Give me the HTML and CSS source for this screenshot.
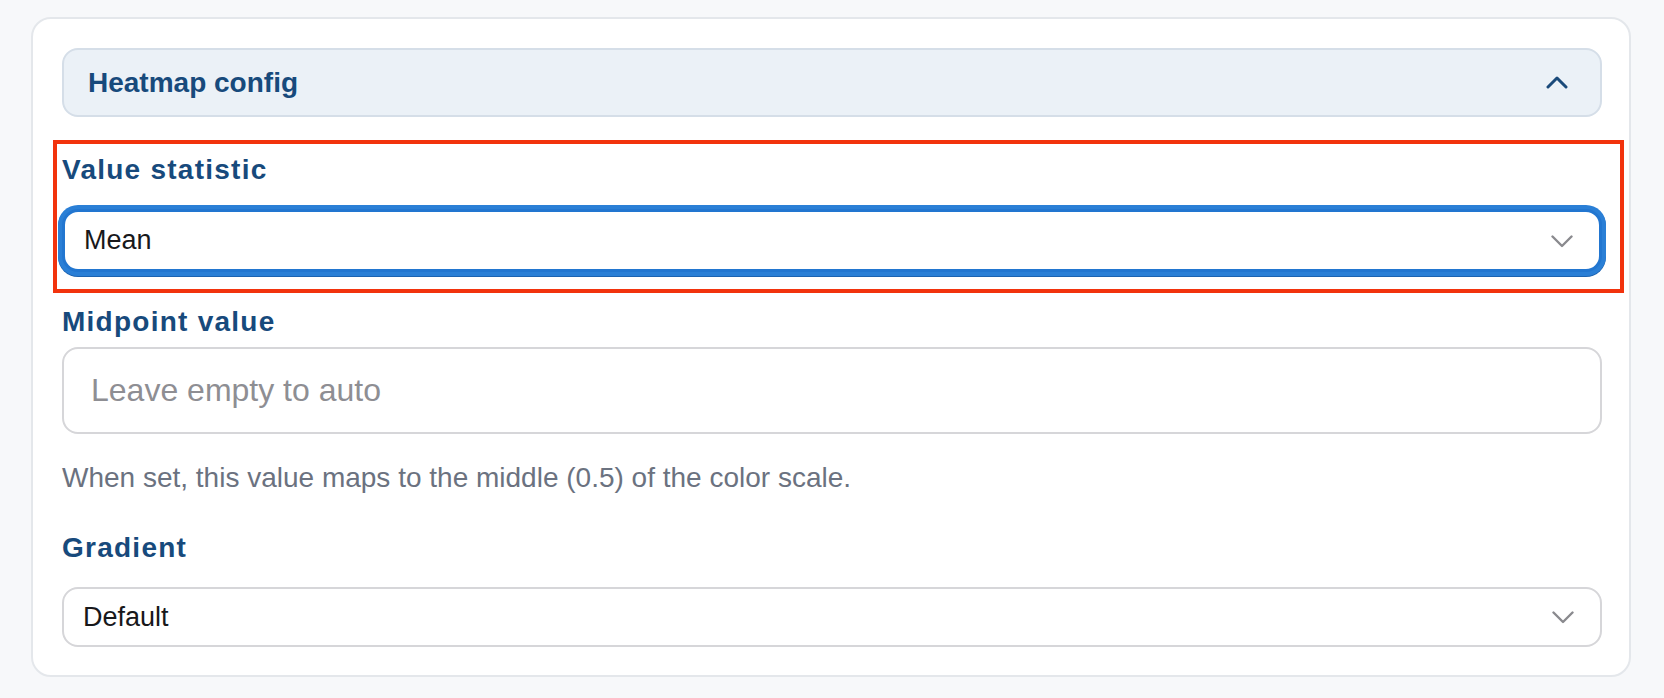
FILE: index.html
```html
<!DOCTYPE html>
<html lang="en">
<head>
  <meta charset="UTF-8">
  <meta name="viewport" content="width=device-width, initial-scale=1.0">
  <title>Heatmap config</title>
  <link rel="stylesheet" href="styles.css">
</head>
<body>
  <!-- Config card -->
  <div class="card">
    <div class="section-header">
      <span>Heatmap config</span>
      <svg class="chevron-up" width="22" height="14" viewBox="0 0 22 14">
        <path d="M2 12 L11 3 L20 12" fill="none" stroke="#1a4a7a" stroke-width="3" stroke-linecap="round" stroke-linejoin="round"/>
      </svg>
    </div>

    <!-- Value statistic (highlighted) -->
    <div class="field field-marked">
      <div class="mark-box"></div>
      <label class="field-label">Value statistic</label>
      <div class="select-box focused">
        <span>Mean</span>
        <svg class="chevron-down" width="22" height="13" viewBox="0 0 22 13">
          <path d="M1.5 1.5 L11 11 L20.5 1.5" fill="none" stroke="#8a8a8e" stroke-width="2.4" stroke-linecap="round" stroke-linejoin="round"/>
        </svg>
      </div>
    </div>

    <!-- Midpoint value -->
    <div class="field">
      <label class="field-label tight" for="midpoint">Midpoint value</label>
      <input type="text" id="midpoint" class="text-input" placeholder="Leave empty to auto">
      <p class="help">When set, this value maps to the middle (0.5) of the color scale.</p>
    </div>

    <!-- Gradient -->
    <div class="field">
      <label class="field-label">Gradient</label>
      <div class="select-box">
        <span>Default</span>
        <svg class="chevron-down" width="22" height="13" viewBox="0 0 22 13">
          <path d="M1.5 1.5 L11 11 L20.5 1.5" fill="none" stroke="#8a8a8e" stroke-width="2.4" stroke-linecap="round" stroke-linejoin="round"/>
        </svg>
      </div>
    </div>
  </div>
</body>
</html>
```
FILE: styles.css
```css
body {
  font-family: "Liberation Sans", Arial, sans-serif;
  margin: 0;
  padding: 17px 33px 0 31px;
  background-color: #f7f8fa;
}
.card {
  display: flex;
  flex-direction: column;
  gap: 36px;
  width: 1600px;
  box-sizing: border-box;
  background-color: #fff;
  border: 2px solid #e4e7eb;
  border-radius: 20px;
  padding: 29px 27px 28px 29px;
}
.section-header {
  display: flex;
  align-items: center;
  justify-content: space-between;
  height: 69px;
  box-sizing: border-box;
  padding: 0 32px 0 24px;
  background-color: #ebf1f7;
  border: 2px solid #d5dee8;
  border-radius: 16px;
  color: #174a7c;
  font-size: 28px;
  font-weight: bold;
}
.chevron-up {
  margin-top: -2px;
}
.field {
  display: flex;
  flex-direction: column;
}
.field-marked {
  position: relative;
  margin-bottom: -3px;
}
.mark-box {
  position: absolute;
  top: -13px;
  left: -9px;
  right: -22px;
  bottom: -21px;
  border: 4px solid #f2330d;
  pointer-events: none;
}
.field-label {
  color: #174a7c;
  font-size: 28px;
  font-weight: bold;
  line-height: 34px;
  letter-spacing: 1.25px;
  margin-bottom: 22px;
}
.field-label.tight {
  margin-bottom: 8px;
}
.select-box {
  display: flex;
  align-items: center;
  justify-content: space-between;
  height: 60px;
  box-sizing: border-box;
  padding: 0 26px 0 19px;
  border: 2px solid #d6d6d9;
  border-radius: 16px;
  background-color: #fff;
  color: #18181b;
  font-size: 27px;
}
.select-box.focused {
  height: 63px;
  border: 3px solid #2276d0;
  box-shadow: 0 0 0 4px #2a7fd6, 0 1px 0 4px #1c63b0;
}
.chevron-down {
  margin-top: 1px;
}
.text-input {
  height: 87px;
  box-sizing: border-box;
  padding: 0 27px;
  border: 2px solid #d6d6d9;
  border-radius: 16px;
  font-family: "Liberation Sans", Arial, sans-serif;
  font-size: 32px;
  color: #18181b;
  outline: none;
}
.text-input::placeholder {
  color: #8e8e93;
}
.help {
  margin: 27px 0 0 0;
  color: #6b7280;
  font-size: 28px;
  line-height: 34px;
}
```
